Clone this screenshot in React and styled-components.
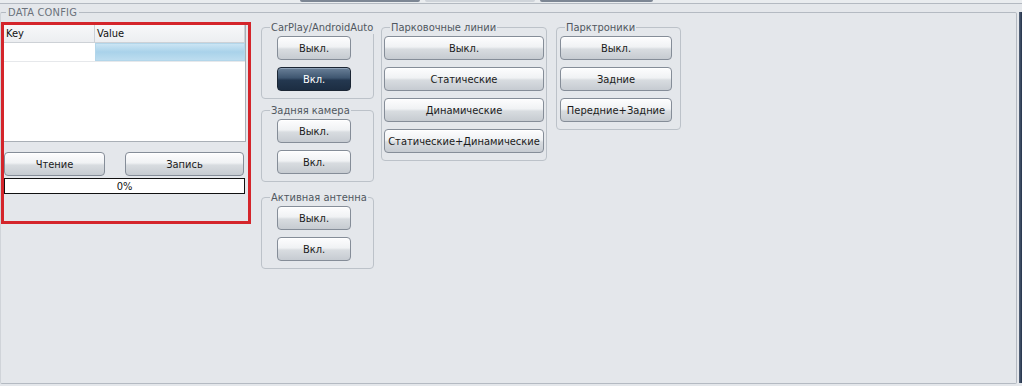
import React from "react";
import styled, { createGlobalStyle } from "styled-components";

const GlobalStyle = createGlobalStyle`
  html, body {
    margin: 0;
    padding: 0;
    background: #e4e7eb;
  }
  #root {
    height: 386px;
    overflow: hidden;
  }
`;

const FONT = `"DejaVu Sans Condensed", "DejaVu Sans", sans-serif`;

const Page = styled.div`
  height: 386px;
  display: flex;
  flex-direction: column;
  font-family: ${FONT};
  font-size: 11px;
  color: #1b1b1b;
`;

// bottoms of the tab buttons that sit above the visible area
const TopStrip = styled.div`
  height: 3px;
  display: flex;
  padding-left: 300px;
  gap: 5px;
  border-bottom: 1px solid #b3b9c1;
  background: #e9ecef;
`;

const TabStub = styled.div`
  width: ${(p) => p.$w}px;
  height: 2px;
  border-radius: 0 0 3px 3px;
  background: ${(p) => (p.$light ? "#cfd4da" : "#7c8694")};
`;

const Body = styled.div`
  flex: 1;
  display: flex;
  min-height: 0;
`;

const MainGroup = styled.fieldset`
  flex: 1;
  margin: 2px 2px 2px 0;
  padding: 2px 0 0 0;
  border: 1px solid #b4bac2;
  border-left-color: #d0d4d9;
  border-radius: 2px;
  min-width: 0;
  display: flex;
  align-items: flex-start;
`;

const MainLegend = styled.legend`
  margin-left: 5px;
  padding: 0 2px;
  font-size: 11px;
  line-height: 13px;
  color: #6b727b;
  letter-spacing: 0.2px;
`;

const EdgeBar = styled.div`
  width: 3px;
  margin: 8px 0 3px 0;
  background: linear-gradient(90deg, #55647a, #23324a);
`;

const Workspace = styled.div`
  display: flex;
  align-items: flex-start;
`;

const DataPanel = styled.div`
  width: 244px;
  height: 196px;
  margin-top: 1px;
  border: 3px solid #d4252b;
  display: flex;
  flex-direction: column;
`;

const Table = styled.div`
  height: 117px;
  background: #fff;
  border-right: 1px solid #a9afb6;
  border-bottom: 1px solid #a9afb6;
  margin-right: 2px;
  box-sizing: border-box;
  display: flex;
  flex-direction: column;
`;

const TableRow = styled.div`
  display: grid;
  grid-template-columns: 91px 1fr;
  height: ${(p) => p.$h}px;
`;

const HeadCell = styled.div`
  display: flex;
  align-items: center;
  padding-left: 2px;
  background: linear-gradient(#f7f8f9, #eceef1);
  border-bottom: 1px solid #cdd1d6;
  border-right: 1px solid #cdd1d6;
  color: #111;
`;

const DataCell = styled.div`
  border-bottom: 1px solid #e6e8eb;
  background: ${(p) =>
    p.$selected
      ? "linear-gradient(#cfe7f5, #a9d2ea 50%, #bfdef0)"
      : "#fff"};
  box-shadow: ${(p) => (p.$selected ? "inset 0 0 0 1px #b3d6ea" : "none")};
`;

const ActionRow = styled.div`
  display: flex;
  justify-content: space-between;
  margin-top: 10px;
  padding-right: 4px;
`;

const Btn = styled.button`
  box-sizing: border-box;
  width: ${(p) => (p.$w ? `${p.$w}px` : "100%")};
  height: 24px;
  padding: 0;
  border: 1px solid ${(p) => (p.$active ? "#1b2634" : "#858d98")};
  border-radius: 4px;
  font-family: ${FONT};
  font-size: 11px;
  color: ${(p) => (p.$active ? "#fff" : "#1b1b1b")};
  background: ${(p) =>
    p.$active
      ? "linear-gradient(#6a8098 0%, #3e5670 45%, #243850 55%, #1c2d42 100%)"
      : "linear-gradient(#fdfdfe 0%, #f0f2f4 45%, #d8dce0 55%, #c6cbd1 100%)"};
  box-shadow: inset 0 1px 0 ${(p) => (p.$active ? "#8ea2b8" : "#ffffff")};
  white-space: nowrap;
`;

const Progress = styled.div`
  height: 16px;
  margin-top: 2px;
  margin-right: 3px;
  box-sizing: border-box;
  border: 1px solid #111;
  background: #fff;
  display: flex;
  align-items: center;
  justify-content: center;
  color: #111;
`;

const Column = styled.div`
  display: flex;
  flex-direction: column;
  margin-left: ${(p) => p.$ml}px;
`;

const Group = styled.fieldset`
  box-sizing: border-box;
  width: ${(p) => p.$w}px;
  margin: ${(p) => p.$mt || 0}px 0 0 0;
  padding: 0;
  border: 1px solid #bcc2c9;
  border-radius: 4px;
  min-width: 0;
`;

const Legend = styled.legend`
  margin-left: 8px;
  padding: 0 1px;
  font-size: 11px;
  line-height: 13px;
  color: #50575f;
  white-space: nowrap;
`;

const ButtonStack = styled.div`
  display: flex;
  flex-direction: column;
  gap: 7px;
  padding: 2px ${(p) => p.$pr}px 7px ${(p) => p.$pl}px;
`;

const groups = [
  [
    { title: "CarPlay/AndroidAuto", mt: 0, items: ["Выкл.", "Вкл."], active: 1 },
    { title: "Задняя камера", mt: 5, items: ["Выкл.", "Вкл."] },
    { title: "Активная антенна", mt: 9, items: ["Выкл.", "Вкл."] },
  ],
  [
    {
      title: "Парковочные линии",
      items: ["Выкл.", "Статические", "Динамические", "Статические+Динамические"],
    },
  ],
  [{ title: "Парктроники", items: ["Выкл.", "Задние", "Передние+Задние"] }],
];

const columnBox = [
  { ml: 10, w: 113, pl: 15, pr: 22 },
  { ml: 7, w: 166, pl: 2, pr: 2 },
  { ml: 9, w: 125, pl: 3, pr: 8 },
];

export default function App() {
  return (
    <Page>
      <GlobalStyle />
      <TopStrip>
        <TabStub $w={120} />
        <TabStub $w={110} $light />
        <TabStub $w={113} />
      </TopStrip>
      <Body>
        <MainGroup>
          <MainLegend>DATA CONFIG</MainLegend>
          <Workspace>
            <DataPanel>
              <Table>
                <TableRow $h={18}>
                  <HeadCell>Key</HeadCell>
                  <HeadCell>Value</HeadCell>
                </TableRow>
                <TableRow $h={19}>
                  <DataCell />
                  <DataCell $selected />
                </TableRow>
              </Table>
              <ActionRow>
                <Btn $w={101}>Чтение</Btn>
                <Btn $w={119}>Запись</Btn>
              </ActionRow>
              <Progress>0%</Progress>
            </DataPanel>
            {groups.map((col, ci) => (
              <Column key={ci} $ml={columnBox[ci].ml}>
                {col.map((g) => (
                  <Group key={g.title} $w={columnBox[ci].w} $mt={g.mt}>
                    <Legend>{g.title}</Legend>
                    <ButtonStack $pl={columnBox[ci].pl} $pr={columnBox[ci].pr}>
                      {g.items.map((label, i) => (
                        <Btn key={label + i} $active={g.active === i}>
                          {label}
                        </Btn>
                      ))}
                    </ButtonStack>
                  </Group>
                ))}
              </Column>
            ))}
          </Workspace>
        </MainGroup>
        <EdgeBar />
      </Body>
    </Page>
  );
}
